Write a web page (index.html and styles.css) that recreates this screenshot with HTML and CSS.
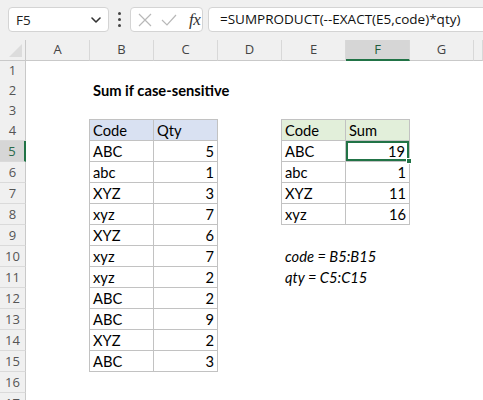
FILE: index.html
```html
<!DOCTYPE html>
<html>
<head>
<meta charset="utf-8">
<link rel="stylesheet" href="styles.css">
</head>
<body>
<div class="app">
  <div class="toolbar">
    <div class="namebox">
      <span class="name">F5</span>
      <svg class="chev" width="10" height="6" viewBox="0 0 10 6"><path d="M1 1 L5 5 L9 1" fill="none" stroke="#333" stroke-width="1.6" stroke-linecap="round" stroke-linejoin="round"/></svg>
    </div>
    <div class="dots"><span></span><span></span><span></span></div>
    <div class="fxbox">
      <svg width="14" height="14" viewBox="0 0 14 14"><path d="M1 1 L13 13 M13 1 L1 13" stroke="#b8b8b8" stroke-width="1.2" fill="none"/></svg>
      <svg width="16" height="12" viewBox="0 0 16 12"><path d="M1 6 L6 11 L15 1" stroke="#b8b8b8" stroke-width="1.2" fill="none"/></svg>
      <span class="fx">fx</span>
    </div>
    <div class="formula">=SUMPRODUCT(--EXACT(E5,code)*qty)</div>
  </div>

  <div class="sheet">
    <div class="row hdr">
      <div class="corner"><span class="tri"></span></div>
      <div class="ch">A</div><div class="ch">B</div><div class="ch">C</div><div class="ch">D</div><div class="ch">E</div><div class="ch sel">F</div><div class="ch">G</div><div class="ch"></div>
    </div>
    <div class="row short"><div class="rh">1</div></div>
    <div class="row short"><div class="rh">2</div><div class="c"></div><div class="c title">Sum if case-sensitive</div></div>
    <div class="row short"><div class="rh">3</div></div>
    <div class="row"><div class="rh">4</div><div class="c"></div>
      <div class="c t top left blue">Code</div><div class="c t top blue">Qty</div><div class="c"></div>
      <div class="c t top left green">Code</div><div class="c t top green">Sum</div></div>
    <div class="row"><div class="rh rsel">5</div><div class="c"></div>
      <div class="c t left">ABC</div><div class="c t n">5</div><div class="c"></div>
      <div class="c t left">ABC</div><div class="c t n active">19<span class="handle"></span></div></div>
    <div class="row"><div class="rh">6</div><div class="c"></div>
      <div class="c t left">abc</div><div class="c t n">1</div><div class="c"></div>
      <div class="c t left">abc</div><div class="c t n">1</div></div>
    <div class="row"><div class="rh">7</div><div class="c"></div>
      <div class="c t left">XYZ</div><div class="c t n">3</div><div class="c"></div>
      <div class="c t left">XYZ</div><div class="c t n">11</div></div>
    <div class="row"><div class="rh">8</div><div class="c"></div>
      <div class="c t left">xyz</div><div class="c t n">7</div><div class="c"></div>
      <div class="c t left">xyz</div><div class="c t n">16</div></div>
    <div class="row"><div class="rh">9</div><div class="c"></div>
      <div class="c t left">XYZ</div><div class="c t n">6</div></div>
    <div class="row"><div class="rh">10</div><div class="c"></div>
      <div class="c t left">xyz</div><div class="c t n">7</div><div class="c"></div>
      <div class="c note">code = B5:B15</div></div>
    <div class="row"><div class="rh">11</div><div class="c"></div>
      <div class="c t left">xyz</div><div class="c t n">2</div><div class="c"></div>
      <div class="c note">qty = C5:C15</div></div>
    <div class="row"><div class="rh">12</div><div class="c"></div>
      <div class="c t left">ABC</div><div class="c t n">2</div></div>
    <div class="row"><div class="rh">13</div><div class="c"></div>
      <div class="c t left">ABC</div><div class="c t n">9</div></div>
    <div class="row"><div class="rh">14</div><div class="c"></div>
      <div class="c t left">XYZ</div><div class="c t n">2</div></div>
    <div class="row"><div class="rh">15</div><div class="c"></div>
      <div class="c t left">ABC</div><div class="c t n">3</div></div>
    <div class="row"><div class="rh">16</div></div>
    <div class="row"><div class="rh">17</div></div>
  </div>
</div>
</body>
</html>
```

FILE: styles.css
```css
* { box-sizing: border-box; }
html, body { margin: 0; padding: 0; }
body {
  width: 483px;
  height: 400px;
  overflow: hidden;
  background: #fff;
  font-family: "Open Sans", "Noto Sans", sans-serif;
}
.app { display: flex; flex-direction: column; }

.toolbar {
  height: 40px;
  background: #f0f0f0;
  display: flex;
  align-items: flex-start;
  padding: 7px 0 0 8px;
}
.namebox {
  width: 101px;
  height: 25px;
  background: #fff;
  border: 1px solid #d4d4d4;
  border-radius: 4px;
  display: flex;
  align-items: center;
  justify-content: space-between;
  padding: 0 7px 0 7px;
}
.name { font-size: 13.5px; color: #222; }
.dots {
  width: 21px;
  height: 25px;
  display: flex;
  flex-direction: column;
  align-items: center;
  justify-content: center;
  gap: 3px;
}
.dots span { width: 3px; height: 3px; background: #444; border-radius: 50%; }
.fxbox {
  width: 73px;
  height: 25px;
  background: #fff;
  border: 1px solid #d4d4d4;
  border-radius: 4px;
  display: flex;
  align-items: center;
  padding: 0 0 0 7px;
  gap: 9px;
}
.fx {
  font-family: "Liberation Serif", serif;
  font-style: italic;
  font-size: 17px;
  color: #333;
  margin-left: 3px;
  letter-spacing: -0.5px;
}
.formula {
  flex: 1;
  margin-left: 5px;
  margin-right: -10px;
  height: 25px;
  background: #fff;
  border: 1px solid #d4d4d4;
  border-radius: 4px;
  padding: 0 0 0 11px;
  font-size: 13.5px;
  line-height: 23px;
  color: #111;
  white-space: nowrap;
}

.sheet { display: flex; flex-direction: column; }
.row {
  display: grid;
  grid-template-columns: 26px repeat(7, 64px) 1fr;
  height: 21px;
}
.row.short { height: 20px; }
.row.hdr { height: 20px; background: #f0f0f0; }

.corner {
  position: relative;
  border-right: 1px solid #c9c9c9;
  border-bottom: 1px solid #c9c9c9;
}
.tri {
  position: absolute;
  right: 3px;
  bottom: 3px;
  width: 0; height: 0;
  border-left: 13px solid transparent;
  border-bottom: 13px solid #dcdcdc;
}
.ch {
  border-right: 1px solid #d8d8d8;
  border-bottom: 1px solid #c9c9c9;
  text-align: center;
  font-size: 13px;
  line-height: 19px;
  color: #444;
}
.ch.sel {
  background: #d6d6d6;
  border-bottom: 2px solid #217346;
  color: #1f5c3c;
}
.rh {
  background: #f0f0f0;
  border-right: 1px solid #c9c9c9;
  border-bottom: 1px solid #dadada;
  text-align: center;
  font-size: 13px;
  line-height: 20px;
  color: #555;
}
.rh.rsel {
  background: #d6d6d6;
  border-right: 2px solid #217346;
  color: #2b6a4b;
}

.c {
  font-family: "Lato", "Liberation Sans", sans-serif;
  font-size: 14.7px;
  color: #000;
  line-height: 20px;
  padding: 0 3px;
  white-space: nowrap;
}
.title { font-weight: bold; overflow: visible; }
.t {
  border-right: 1px solid #c2c2c2;
  border-bottom: 1px solid #c2c2c2;
}
.t.left { box-shadow: -1px 0 0 #c2c2c2; }
.t.top.left { box-shadow: -1px 0 0 #c2c2c2, 0 -1px 0 #c2c2c2, -1px -1px 0 #c2c2c2; }
.t.top { box-shadow: 0 -1px 0 #c2c2c2; }
.blue { background: #d9e1f2; }
.green { background: #e2efda; }
.n { text-align: right; }
.note { font-style: italic; padding-left: 3px; }
.active {
  position: relative;
  box-shadow: inset 0 0 0 2px #217346;
  padding-right: 4px;
}
.handle {
  position: absolute;
  right: -3px;
  bottom: -3px;
  width: 6px;
  height: 6px;
  background: #217346;
  border: 1px solid #fff;
}
```
